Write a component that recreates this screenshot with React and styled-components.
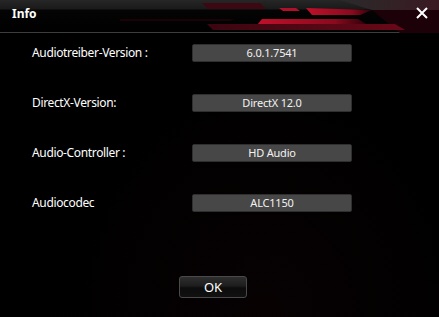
import { Fragment } from "react";
import styled, { createGlobalStyle } from "styled-components";

const GlobalStyle = createGlobalStyle`
  html, body {
    margin: 0;
    padding: 0;
    background: #000;
  }
`;

const Window = styled.div`
  width: 439px;
  height: 317px;
  display: flex;
  flex-direction: column;
  background: radial-gradient(ellipse at 60% 100%, #070102 0%, #000 60%);
  font-family: "Noto Sans", "Open Sans", sans-serif;
  color: #fff;
  overflow: hidden;
`;

const TitleBar = styled.div`
  position: relative;
  height: 33px;
  flex-shrink: 0;
  display: flex;
  align-items: center;
  justify-content: space-between;
  padding: 0 12px 6px 12px;
  box-sizing: border-box;
  background: linear-gradient(#262626 0px, #1a1a1a 9px, #040404 10px, #000 33px);
  border-bottom: 1px solid #3d3d3d;
`;

const Stripes = styled.svg`
  position: absolute;
  left: 0;
  top: 0;
  width: 439px;
  height: 33px;
`;

const Title = styled.span`
  position: relative;
  font-size: 12px;
  font-weight: bold;
`;

const CloseButton = styled.button`
  position: relative;
  background: none;
  border: none;
  padding: 0;
  margin-right: -2px;
  width: 14px;
  height: 14px;
  cursor: pointer;
  display: flex;
`;

const Body = styled.div`
  display: grid;
  grid-template-columns: 160px 160px;
  row-gap: 32px;
  padding: 11px 0 0 32px;
`;

const Label = styled.div`
  font-size: 12px;
  letter-spacing: -0.35px;
  line-height: 18px;
  height: 18px;
  color: #fff;
`;

const ValueBox = styled.div`
  height: 18px;
  box-sizing: border-box;
  background: #474747;
  border: 1px solid #2f2f2f;
  border-radius: 2px;
  font-size: 11px;
  letter-spacing: -0.2px;
  line-height: 16px;
  text-align: center;
  color: #f2f2f2;
`;

const Footer = styled.div`
  margin-top: auto;
  padding: 0 0 19px 179px;
`;

const OkButton = styled.button`
  width: 68px;
  height: 22px;
  border: 1px solid #4a4a4a;
  border-radius: 3px;
  background: linear-gradient(#2e2e2e 0%, #1d1d1d 45%, #0c0c0c 55%, #111 100%);
  color: #fff;
  font-family: "Noto Sans", "Open Sans", sans-serif;
  font-size: 13px;
  padding: 0;
  line-height: 20px;
  cursor: pointer;
`;

const rows = [
  { label: "Audiotreiber-Version :", value: "6.0.1.7541" },
  { label: "DirectX-Version:", value: "DirectX 12.0" },
  { label: "Audio-Controller :", value: "HD Audio" },
  { label: "Audiocodec", value: "ALC1150" },
];

const App = () => {
  return (
    <>
      <GlobalStyle />
      <Window>
        <TitleBar>
          <Stripes viewBox="0 0 439 33">
            <defs>
              <linearGradient id="grayRed" x1="0" y1="0" x2="1" y2="0">
                <stop offset="0" stopColor="#2a2a2a" />
                <stop offset="1" stopColor="#3a1a22" />
              </linearGradient>
              <linearGradient id="redFade" x1="0" y1="0" x2="1" y2="0">
                <stop offset="0" stopColor="#c0102a" />
                <stop offset="0.7" stopColor="#8a0a1e" />
                <stop offset="1" stopColor="#2a0008" />
              </linearGradient>
              <linearGradient id="darkRed" x1="0" y1="0" x2="1" y2="0">
                <stop offset="0" stopColor="#3a0610" />
                <stop offset="1" stopColor="#6a0818" />
              </linearGradient>
            </defs>
            <polygon points="340,0 439,0 439,10 372,10" fill="url(#grayRed)" />
            <polygon points="372,10 439,10 439,33 400,33" fill="#1c0208" />
            <polygon points="202,3 260,3 266,9 208,9" fill="#3c0812" />
            <polygon points="279,8 296,8 300,11 283,11" fill="#b0102a" />
            <polygon points="306,8 372,10 360,15 312,15" fill="url(#redFade)" />
            <polygon points="262,19 358,19 368,25 257,25" fill="url(#redFade)" />
            <polygon points="207,24 395,24 405,30 213,30" fill="url(#darkRed)" />
            <polygon points="120,19 235,19 230,21 120,21" fill="#1a0306" />
          </Stripes>
          <Title>Info</Title>
          <CloseButton aria-label="Close">
            <svg width="14" height="14" viewBox="0 0 14 14">
              <path d="M2 2 L12 12 M12 2 L2 12" stroke="#fff" strokeWidth="2" />
            </svg>
          </CloseButton>
        </TitleBar>
        <Body>
          {rows.map(row => (
            <Fragment key={row.label}>
              <Label>{row.label}</Label>
              <ValueBox>{row.value}</ValueBox>
            </Fragment>
          ))}
        </Body>
        <Footer>
          <OkButton>OK</OkButton>
        </Footer>
      </Window>
    </>
  );
};

export default App;
